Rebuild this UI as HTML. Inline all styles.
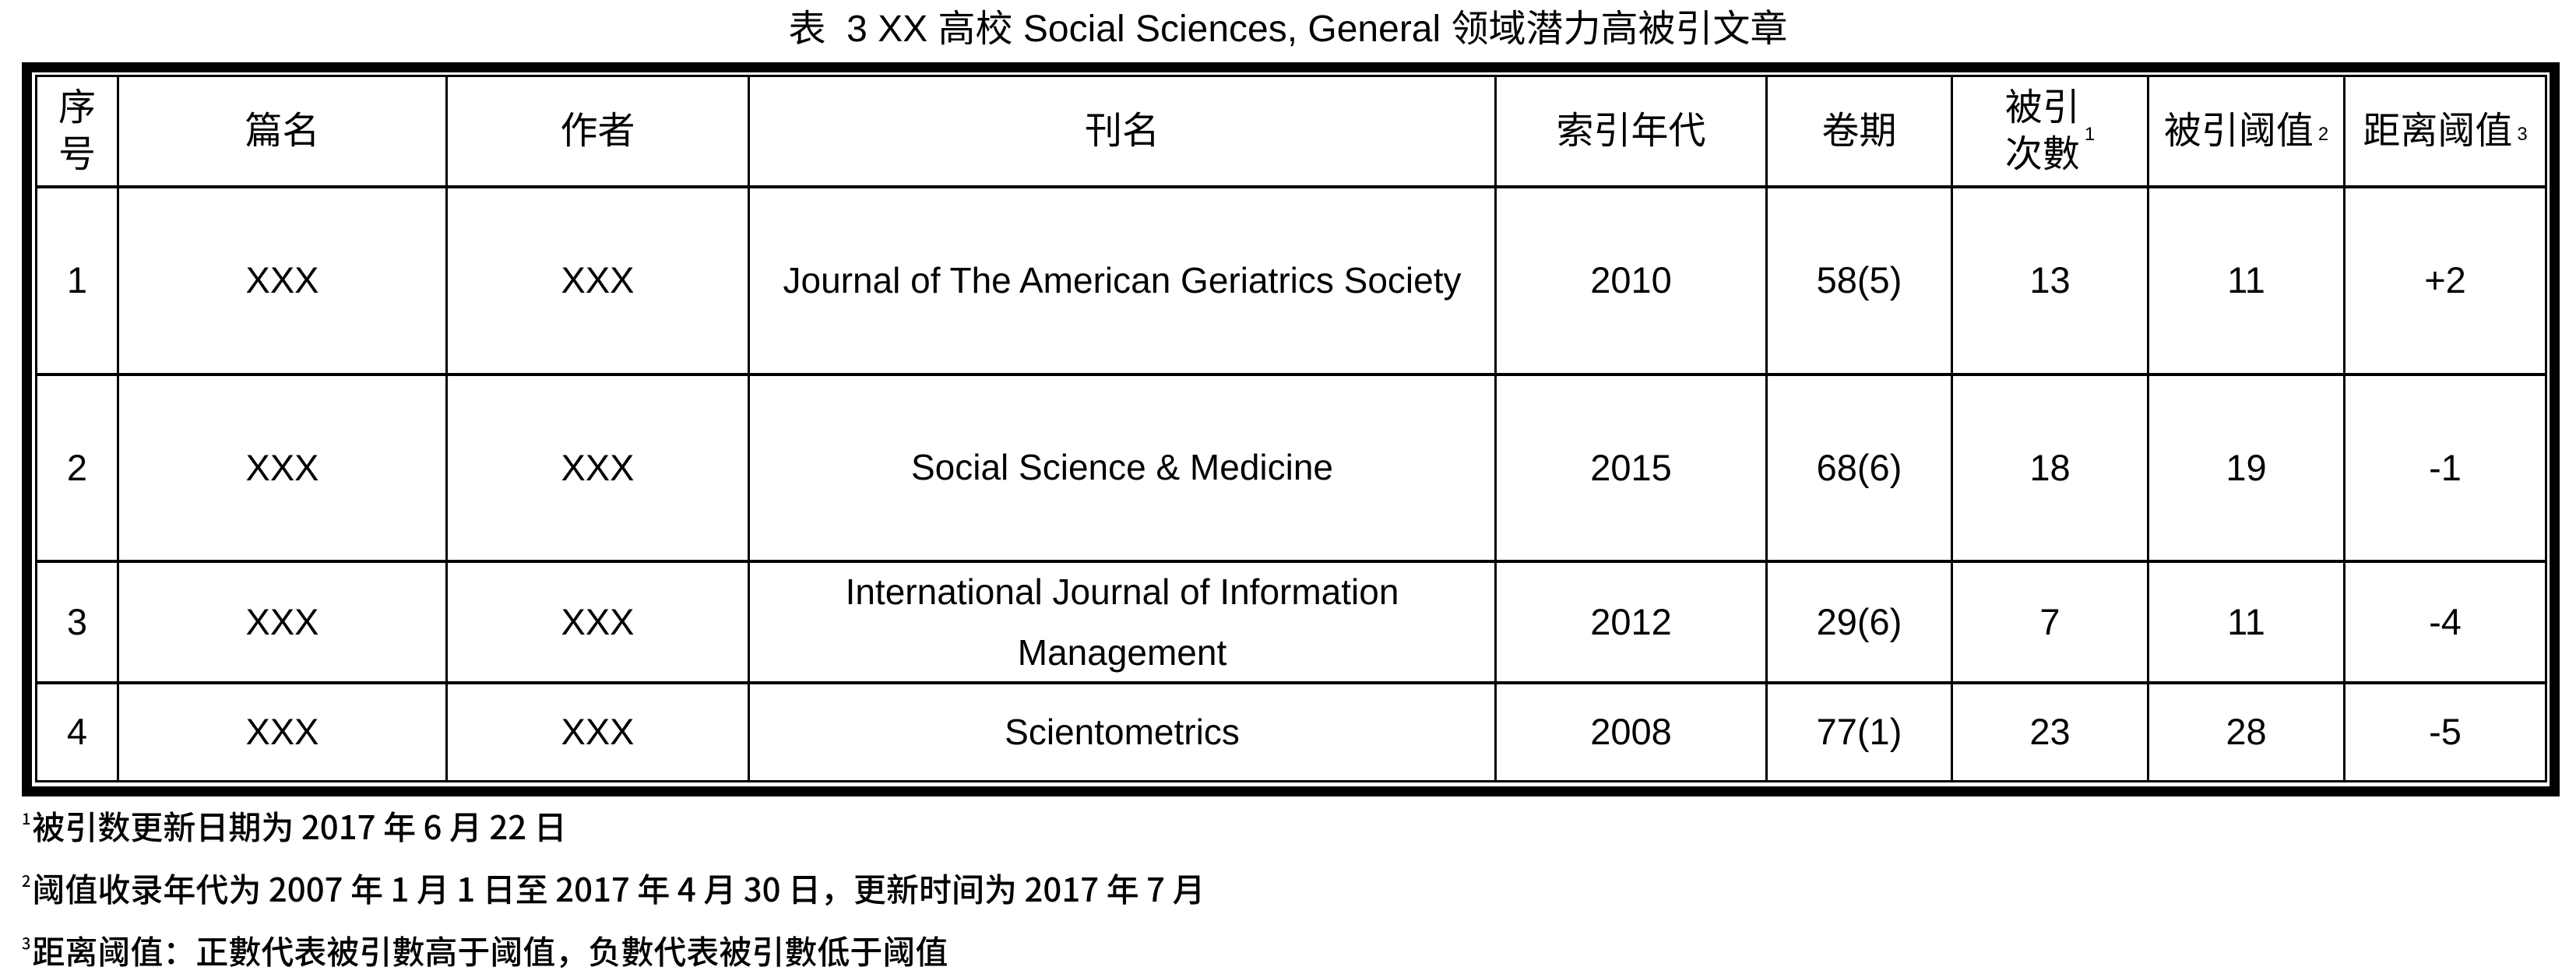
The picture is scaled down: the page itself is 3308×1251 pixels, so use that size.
<!DOCTYPE html>
<html><head><meta charset="utf-8"><style>
body{margin:0;width:3308px;height:1248px;background:#fff;position:relative;overflow:hidden;font-family:"Liberation Sans","Noto Sans CJK SC",sans-serif;color:#000}
.l{position:absolute;background:#000}
.c{position:absolute;display:flex;align-items:center;justify-content:center;text-align:center;font-size:47px;line-height:1.25}
.h{font-size:48px}
sup{font-size:24px;vertical-align:top;position:relative;top:4px;margin-left:6px}
.f{position:absolute;left:28px;font-size:42px;font-family:"Noto Sans CJK SC","Liberation Sans",sans-serif;font-weight:500;white-space:nowrap}
.f sup{font-size:20px;margin:0 2px 0 0;top:6px}
</style></head><body>
<div class="c" style="left:0;width:3308px;top:6px;height:64px;font-size:48px;font-weight:normal">表&nbsp;&nbsp;3 XX 高校 Social Sciences, General 领域潜力高被引文章</div>
<!-- outer -->
<div class="l" style="left:28px;top:80px;width:3259px;height:13px"></div>
<div class="l" style="left:28px;top:1010px;width:3259px;height:13px"></div>
<div class="l" style="left:28px;top:80px;width:13px;height:943px"></div>
<div class="l" style="left:3274px;top:80px;width:13px;height:943px"></div>
<!-- inner -->
<div class="l" style="left:45px;top:96px;width:3226px;height:3px"></div>
<div class="l" style="left:45px;top:1002px;width:3226px;height:3px"></div>
<div class="l" style="left:45px;top:96px;width:3px;height:909px"></div>
<div class="l" style="left:3268px;top:96px;width:3px;height:909px"></div>
<!-- rows -->
<div class="l" style="left:45px;top:238px;width:3226px;height:4px"></div>
<div class="l" style="left:45px;top:479px;width:3226px;height:4px"></div>
<div class="l" style="left:45px;top:719px;width:3226px;height:4px"></div>
<div class="l" style="left:45px;top:875px;width:3226px;height:4px"></div>
<!-- cols -->
<div class="l" style="left:150px;top:96px;width:3px;height:909px"></div>
<div class="l" style="left:572px;top:96px;width:3px;height:909px"></div>
<div class="l" style="left:960px;top:96px;width:3px;height:909px"></div>
<div class="l" style="left:1919px;top:96px;width:3px;height:909px"></div>
<div class="l" style="left:2267px;top:96px;width:3px;height:909px"></div>
<div class="l" style="left:2505px;top:96px;width:3px;height:909px"></div>
<div class="l" style="left:2757px;top:96px;width:3px;height:909px"></div>
<div class="l" style="left:3009px;top:96px;width:3px;height:909px"></div>

<!-- header -->
<div class="c h" style="left:48px;width:102px;top:99px;height:139px">序<br>号</div>
<div class="c h" style="left:153px;width:419px;top:99px;height:139px">篇名</div>
<div class="c h" style="left:575px;width:385px;top:99px;height:139px">作者</div>
<div class="c h" style="left:963px;width:956px;top:99px;height:139px">刊名</div>
<div class="c h" style="left:1922px;width:345px;top:99px;height:139px">索引年代</div>
<div class="c h" style="left:2270px;width:235px;top:99px;height:139px">卷期</div>
<div class="c h" style="left:2508px;width:249px;top:99px;height:139px">被引<br>次數<sup>1</sup></div>
<div class="c h" style="left:2760px;width:249px;top:99px;height:139px;white-space:nowrap">被引阈值<sup>2</sup></div>
<div class="c h" style="left:3012px;width:256px;top:99px;height:139px;white-space:nowrap">距离阈值<sup>3</sup></div>

<!-- row1 -->
<div class="c" style="left:48px;width:102px;top:242px;height:237px">1</div>
<div class="c" style="left:153px;width:419px;top:242px;height:237px">XXX</div>
<div class="c" style="left:575px;width:385px;top:242px;height:237px">XXX</div>
<div class="c" style="left:963px;width:956px;top:242px;height:237px;white-space:nowrap;font-size:46px">Journal of The American Geriatrics Society</div>
<div class="c" style="left:1922px;width:345px;top:242px;height:237px">2010</div>
<div class="c" style="left:2270px;width:235px;top:242px;height:237px">58(5)</div>
<div class="c" style="left:2508px;width:249px;top:242px;height:237px">13</div>
<div class="c" style="left:2760px;width:249px;top:242px;height:237px">11</div>
<div class="c" style="left:3012px;width:256px;top:242px;height:237px">+2</div>
<!-- row2 -->
<div class="c" style="left:48px;width:102px;top:483px;height:236px">2</div>
<div class="c" style="left:153px;width:419px;top:483px;height:236px">XXX</div>
<div class="c" style="left:575px;width:385px;top:483px;height:236px">XXX</div>
<div class="c" style="left:963px;width:956px;top:483px;height:236px;font-size:46px">Social Science &amp; Medicine</div>
<div class="c" style="left:1922px;width:345px;top:483px;height:236px">2015</div>
<div class="c" style="left:2270px;width:235px;top:483px;height:236px">68(6)</div>
<div class="c" style="left:2508px;width:249px;top:483px;height:236px">18</div>
<div class="c" style="left:2760px;width:249px;top:483px;height:236px">19</div>
<div class="c" style="left:3012px;width:256px;top:483px;height:236px">-1</div>
<!-- row3 -->
<div class="c" style="left:48px;width:102px;top:723px;height:152px">3</div>
<div class="c" style="left:153px;width:419px;top:723px;height:152px">XXX</div>
<div class="c" style="left:575px;width:385px;top:723px;height:152px">XXX</div>
<div class="c" style="left:963px;width:956px;top:723px;height:152px;line-height:1.7;font-size:46px">International Journal of Information<br>Management</div>
<div class="c" style="left:1922px;width:345px;top:723px;height:152px">2012</div>
<div class="c" style="left:2270px;width:235px;top:723px;height:152px">29(6)</div>
<div class="c" style="left:2508px;width:249px;top:723px;height:152px">7</div>
<div class="c" style="left:2760px;width:249px;top:723px;height:152px">11</div>
<div class="c" style="left:3012px;width:256px;top:723px;height:152px">-4</div>
<!-- row4 -->
<div class="c" style="left:48px;width:102px;top:879px;height:123px">4</div>
<div class="c" style="left:153px;width:419px;top:879px;height:123px">XXX</div>
<div class="c" style="left:575px;width:385px;top:879px;height:123px">XXX</div>
<div class="c" style="left:963px;width:956px;top:879px;height:123px;font-size:46px">Scientometrics</div>
<div class="c" style="left:1922px;width:345px;top:879px;height:123px">2008</div>
<div class="c" style="left:2270px;width:235px;top:879px;height:123px">77(1)</div>
<div class="c" style="left:2508px;width:249px;top:879px;height:123px">23</div>
<div class="c" style="left:2760px;width:249px;top:879px;height:123px">28</div>
<div class="c" style="left:3012px;width:256px;top:879px;height:123px">-5</div>

<div class="f" style="top:1030px"><sup>1</sup>被引数更新日期为 2017 年 6 月 22 日</div>
<div class="f" style="top:1110px"><sup>2</sup>阈值收录年代为 2007 年 1 月 1 日至 2017 年 4 月 30 日，更新时间为 2017 年 7 月</div>
<div class="f" style="top:1190px"><sup>3</sup>距离阈值：正數代表被引數高于阈值，负數代表被引數低于阈值</div>
</body></html>
